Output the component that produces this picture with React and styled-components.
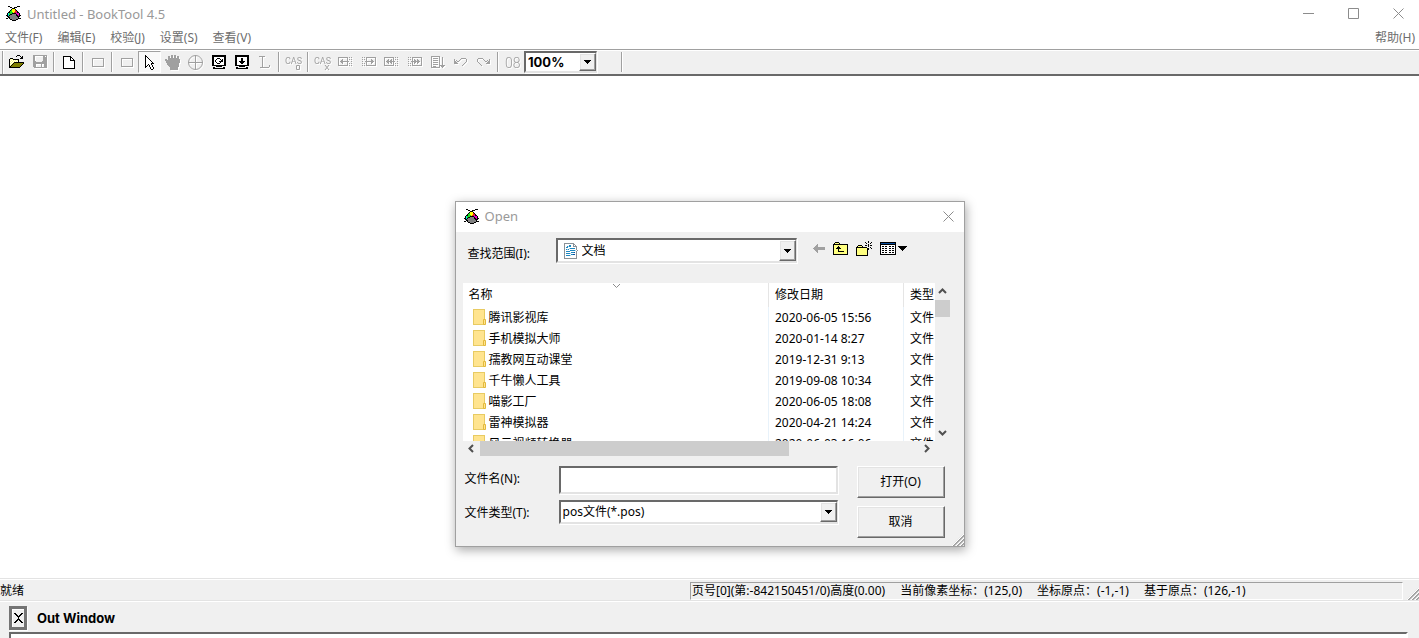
import React from "react";
import styled, { createGlobalStyle, css } from "styled-components";

const GlobalStyle = createGlobalStyle`
  * {
    box-sizing: border-box;
  }

  body {
    margin: 0;
    background: #fff;
    color: #000;
    font-family: "Noto Sans", "Noto Sans CJK SC", sans-serif;
    font-size: 12px;
    line-height: 16px;
  }

  button, input, select {
    font: inherit;
    color: inherit;
    margin: 0;
    padding: 0;
    border: 0;
    border-radius: 0;
    background: none;
    outline: none;
  }

  svg {
    display: block;
    flex: none;
  }
`;

/* ---------- pixel icons ---------- */

const palette = {
  k: "#000000",
  g: "#a0a0a0",
  w: "#ffffff",
  y: "#ffff80",
  Y: "#ffff00",
  o: "#808000",
  c: "#00e0e0",
  n: "#20e020",
  r: "#f02020",
  m: "#e000c0",
  d: "#808080",
  b: "#0a50a0",
  s: "#8a9298",
  l: "#1e88c0",
  t: "#a8d4ec",
};

const PixelIcon = ({ art }) => {
  const rows = art.trim().split("\n").map((row) => row.trim());
  const width = Math.max(...rows.map((row) => row.length));
  const paths = {};

  rows.forEach((row, y) => {
    [...row].forEach((char, x) => {
      if (palette[char]) {
        paths[char] = `${paths[char] || ""}M${x} ${y}h1v1h-1z`;
      }
    });
  });

  return (
    <svg
      width={width}
      height={rows.length}
      viewBox={`0 0 ${width} ${rows.length}`}
      shapeRendering="crispEdges"
      aria-hidden="true"
    >
      {Object.keys(paths).map((char) => (
        <path key={char} d={paths[char]} fill={palette[char]} />
      ))}
    </svg>
  );
};

const art = {
  app: `
    ..kk.......kkk.
    ....kk..kkk....
    ......kkk......
    .....kYYYk.....
    ....knYYYrk....
    ...knnYYYrrk...
    ..kknnnYrrmkk..
    .kcnnnkkkkmmmk.
    .kcnkkddddkmmk.
    kkckddddddkkmkk
    .kkddddddddkkk.
    ..kkddddddddk..
    kk.kddddddddkkk
    ....kkddddkk...
    ......kkkk.....`,
  open: `
    ........kkk....
    .......k...k.k.
    ............kk.
    .kkk.......kkk.
    kywykkkkkk.....
    kwywywywyk.....
    kywywywywk.....
    kwywykkkkkkkkkk
    kywykoooooooook
    kwykoooooooook.
    kykoooooooook..
    kkoooooooook...
    kkkkkkkkkkk....
    ...............`,
  save: `
    gggggggggggggg
    gg........gg.g
    gg........gggg
    gg........gggg
    gg........gggg
    gg........gggg
    ggg......ggggg
    gggggggggggggg
    gggggggggggggg
    ggg.....g..ggg
    ggg.....g..ggg
    ggg.....g..ggg
    .ggggggggggggg
    ..............`,
  page: `
    kkkkkkkk....
    kwwwwwwkk...
    kwwwwwwkwk..
    kwwwwwwkwwk.
    kwwwwwwkkkkk
    kwwwwwwwwwwk
    kwwwwwwwwwwk
    kwwwwwwwwwwk
    kwwwwwwwwwwk
    kwwwwwwwwwwk
    kwwwwwwwwwwk
    kwwwwwwwwwwk
    kkkkkkkkkkkk`,
  rect: `
    gggggggggggg
    g..........g
    g..........g
    g..........g
    g..........g
    g..........g
    g..........g
    g..........g
    gggggggggggg`,
  arrow: `
    k.........
    kk........
    kwk.......
    kwwk......
    kwwwk.....
    kwwwwk....
    kwwwwwk...
    kwwwwwwk..
    kwwwwwkkk.
    kwwkwwk...
    kwk.kwwk..
    kk..kwwk..
    k....kwwk.
    .....kwwk.
    ......kk..`,
  hand: `
    ......gg.gg.....
    ...gg.gg.gg.gg..
    ...gg.gg.gg.gg..
    ...ggggggggggg..
    gg.gggggggggggg.
    ggggggggggggggg.
    .gggggggggggggg.
    .gggggggggggggg.
    ..gggggggggggg..
    ..gggggggggggg..
    ...ggggggggggg..
    ....gggggggggg..
    .....gggggggg...
    .....gggggggg...
    .....gggggggg...`,
  refresh: `
    kkkkkkkkkkkkkk
    kkkkkkkkkkkkkk
    kkwwwwwwwwwwkk
    kkwwwkkkwwwwkk
    kkwwkwwwkwkwkk
    kkwkwwwwwkkwkk
    kkwkwwwkkkkwkk
    kkwwkwwwkwwwkk
    kkwwwkkkwwwwkk
    kkwwwwwwwwwwkk
    kkkkkkkkkkkkkk
    ....kkkkkk....
    .kk........kk.
    .kkkkkkkkkkkk.
    ..............`,
  download: `
    kkkkkkkkkkkkkk
    kkkkkkkkkkkkkk
    kkwwwwwwwwwwkk
    kkwwwwkkwwwwkk
    kkwwwwkkwwwwkk
    kkwwwwkkwwwwkk
    kkwwkkkkkkwwkk
    kkwwwkkkkwwwkk
    kkwwwwkkwwwwkk
    kkwwwwwwwwwwkk
    kkkkkkkkkkkkkk
    ....kkkkkk....
    .kk........kk.
    .kkkkkkkkkkkk.
    ..............`,
  baseline: `
    gggggg.....
    ...g.......
    ...g.......
    ...g.......
    ...g.......
    ...g.......
    ...g.......
    ...g.......
    ...g.......
    ...g......g
    ...g......g
    .ggggggggg.`,
  moveLeft: `
    gggggggggg.g.g.
    g........g.....
    g...g....g.g.g.
    g..gg....g.....
    g.ggggggggg..g.
    g..gg....g.....
    g...g....g.g.g.
    g........g.....
    gggggggggg.g.g.
    ...............`,
  moveRight: `
    .g.g.gggggggggg
    .....g........g
    .g.g.g....g...g
    .....g....gg..g
    .g..ggggggggg.g
    .....g....gg..g
    .g.g.g....g...g
    .....g........g
    .g.g.gggggggggg
    ...............`,
  fastLeft: `
    gggggggggg.g.g.
    g........g.....
    g...g..g.g.g.g.
    g..gg.gg.g.....
    g.ggggggggg..g.
    g..gg.gg.g.....
    g...g..g.g.g.g.
    g........g.....
    gggggggggg.g.g.
    ...............`,
  fastRight: `
    .g.g.gggggggggg
    .....g........g
    .g.g.g.g..g...g
    .....g.gg.gg..g
    .g..ggggggggg.g
    .....g.gg.gg..g
    .g.g.g.g..g...g
    .....g........g
    .g.g.gggggggggg
    ...............`,
  sort: `
    ggggggggg....
    g.......g..g.
    g.ggggg.g..g.
    g.......g..g.
    g.ggggg.g..g.
    g.......g..g.
    g.ggggg.g..g.
    g.......g..g.
    g.ggggg.g..g.
    g.......gggggg
    g.ggg...g.ggg
    ggggggggg..g.`,
  undo: `
    .......ggggg.
    g.....g.....g
    g.g..g......g
    gg.gg.......g
    ggg........g.
    gggg......g..
    .........g...
    ........g....`,
  redo: `
    .ggggg.......
    g.....g.....g
    g......g..g.g
    g.......gg.gg
    .g........ggg
    ..g......gggg
    ...g.........
    ....g........`,
  back: `
    ....g.......
    ...gg.......
    ..ggg.......
    .ggggggggggg
    gggggggggggg
    .ggggggggggg
    ..ggg.......
    ...gg.......
    ....g.......`,
  up: `
    ..kkkk.........
    .kyyyyk........
    kkkkkkkkkkkkkkk
    kyyyyyyyyyyyyyk
    kyyyykyyyyyyyyk
    kyyykkkyyyyyyyk
    kyykkkkkyyyyyyk
    kyyyykyyyyyyyyk
    kyyyykyyyyyyyyk
    kyyyykkkkkkyyyk
    kyyyyyyyyyyyyyk
    kyyyyyyyyyyyyyk
    kkkkkkkkkkkkkkk`,
  create: `
    ............k...
    .........k..k..k
    ..........k...k.
    ............k...
    ..kkkk...kk.k.kk
    .kyyyyk.....k...
    kkkkkkkkkkk...k.
    kyyyyyyyyyykk..k
    kyyyyyyyyyykk...
    kyyyyyyyyyyk....
    kyyyyyyyyyyk....
    kyyyyyyyyyyk....
    kyyyyyyyyyyk....
    kyyyyyyyyyyk....
    kkkkkkkkkkkk....`,
  details: `
    kkkkkkkkkkkkkkkk
    kbbbbbbbbbbbbbbk
    kkkkkkkkkkkkkkkk
    kwwwwwwwwwwwwwwk
    kwkkwkkwwkkwkkwk
    kwwwwwwwwwwwwwwk
    kwkkwkkwwkkwkkwk
    kwwwwwwwwwwwwwwk
    kwkkwkkwwkkwkkwk
    kwwwwwwwwwwwwwwk
    kwkkwkkwwkkwkkwk
    kwwwwwwwwwwwwwwk
    kkkkkkkkkkkkkkkk`,
  drop: `
    kkkkkkkkk
    .kkkkkkk.
    ..kkkkk..
    ...kkk...
    ....k....`,
  dropSmall: `
    kkkkkkk
    .kkkkk.
    ..kkk..
    ...k...`,
  document: `
    ssssssssss...
    swwwwwwwwss..
    swwwwllwwsws.
    swwltllwwssss
    swllwwwwwwwws
    swwwwtlllllws
    swltlwwwwwwws
    swwwwwllllltws
    swllllwwwwwws
    swwwwwwlllbws
    swlllltwwwwws
    swwwwwwllbbws
    swlllltwwwwws
    swwwwwwwwwwws
    swwwwwwwwwwws
    sssssssssssss`,
  cross: `
    kk.....kk
    .kk...kk.
    ..kk.kk..
    ...kkk...
    ....k....
    ....k....
    ...kkk...
    ..kk.kk..
    .kk...kk.
    kk.....kk`,
};

const TargetIcon = () => (
  <svg width="15" height="15" viewBox="0 0 15 15" fill="none" stroke="#a0a0a0">
    <circle cx="7.5" cy="7.5" r="7" />
    <path d="M7.5 0v15M0 7.5h15" />
  </svg>
);

const CasIcon = ({ mark }) => (
  <svg width="17" height="15" viewBox="0 0 17 15" fill="#a0a0a0">
    <text x="0" y="9" fontSize="9" fontFamily="Roboto, sans-serif">
      CAS
    </text>
    {mark === "box" ? (
      <path d="M11.5 10.5h3v4h-3z" fill="none" stroke="#a0a0a0" />
    ) : (
      <path d="M11 10l4 5m0-5l-4 5" fill="none" stroke="#a0a0a0" />
    )}
  </svg>
);

const CounterIcon = () => (
  <svg width="15" height="15" viewBox="0 0 15 15" fill="#a0a0a0">
    <text x="0" y="13" fontSize="14" fontFamily="Roboto, sans-serif" fontWeight="300">
      08
    </text>
  </svg>
);

const Chevron = ({ turn = 0, thin }) => (
  <svg width="9" height="9" viewBox="0 0 9 9" fill="none">
    <path
      d="M1 6l3.500-3.500L8 6"
      transform={`rotate(${turn} 4.500 4.500)`}
      stroke={thin ? "#8c8c8c" : "#505050"}
      strokeWidth={thin ? 1 : 2}
    />
  </svg>
);

const FolderIcon = () => (
  <svg width="14" height="17" viewBox="0 0 14 17">
    <rect x="0.500" y="0.500" width="11" height="15" fill="#ffe48f" stroke="#e8cb62" />
    <path d="M10.500 10.500h2v5h-2z" fill="#ffe48f" stroke="#e3b93c" />
  </svg>
);

const Grip = () => (
  <svg width="12" height="12" viewBox="0 0 12 12" fill="none">
    <path d="M1 12L12 1M5 12l7-7M9 12l3-3" stroke="#a0a0a0" strokeWidth="2" />
    <path d="M0 12L12 0M4 12l8-8M8 12l4-4" stroke="#fff" />
  </svg>
);

/* ---------- shared controls ---------- */

const raised = css`
  background: #f0f0f0;
  border: 1px solid;
  border-color: #fff #696969 #696969 #fff;
  box-shadow: inset -1px -1px 0 #a0a0a0, inset 1px 1px 0 #e3e3e3;
`;

const sunken = css`
  background: #fff;
  border: 2px solid;
  border-color: #696969 #e3e3e3 #e3e3e3 #696969;
  box-shadow: 1px 1px 0 #fff;
`;

const ComboBox = styled.div`
  ${sunken}
  display: flex;
  align-items: stretch;
  width: ${(props) => props.$width || "auto"};
  height: ${(props) => props.$height}px;
  border-right-width: 1px;
`;

const ComboIcon = styled.span`
  display: flex;
  align-items: center;
  padding-left: 6px;
`;

const Select = styled.select`
  flex: 1;
  min-width: 0;
  appearance: none;
  padding-left: ${(props) => props.$indent || 2}px;
  font-family: ${(props) => (props.$bold ? "Inter, sans-serif" : "inherit")};
  font-size: ${(props) => (props.$bold ? 13 : 12)}px;
  font-weight: ${(props) => (props.$bold ? 700 : 400)};
`;

const ComboArrow = styled.span`
  ${raised}
  display: flex;
  align-items: center;
  justify-content: center;
  width: 17px;
`;

/* ---------- main window ---------- */

const Window = styled.div`
  display: flex;
  flex-direction: column;
  min-height: 100vh;
`;

const TitleBar = styled.header`
  display: flex;
  align-items: center;
  height: 27px;
  padding: 0 15px 0 6px;
  gap: 6px;
  color: #999;
`;

const Title = styled.h1`
  flex: 1;
  margin: 0;
  font-size: 13px;
  font-weight: 400;
`;

const WindowButtons = styled.div`
  display: flex;
  gap: 34px;
`;

const WindowButton = styled.button`
  display: flex;
  align-items: center;
  justify-content: center;
`;

const MenuBar = styled.nav`
  display: flex;
  align-items: center;
  gap: 15px;
  height: 22px;
  padding: 0 4px 0 5px;
  color: #6d6d6d;
`;

const MenuItem = styled.button`
  margin-left: ${(props) => (props.$right ? "auto" : 0)};
`;

const ToolBar = styled.div`
  display: flex;
  align-items: center;
  height: 27px;
  padding-left: 2px;
  background: #f0f0f0;
  border-top: 1px solid #a0a0a0;
  border-bottom: 2px solid #696969;
  box-shadow: inset 0 1px 0 #fff, inset 0 -1px 0 #f0f0f0;
`;

const ToolBarEdge = styled.span`
  width: 2px;
  height: 23px;
  margin-right: 1px;
  border-left: 1px solid #a0a0a0;
  border-right: 1px solid #fff;
`;

const ToolButton = styled.button`
  display: flex;
  align-items: center;
  justify-content: center;
  width: 23px;
  height: 22px;

  svg {
    filter: ${(props) => (props.disabled ? "drop-shadow(1px 1px 0 #fff)" : "none")};
  }

  ${(props) =>
    props.$pressed &&
    css`
      background: #f8f8f8;
      border: 1px solid;
      border-color: #a0a0a0 #fff #fff #a0a0a0;
    `}
`;

const Separator = styled.span`
  width: 6px;
  height: 20px;
  padding: 0 2px;

  &::before {
    content: "";
    display: block;
    height: 100%;
    border-left: 1px solid #a0a0a0;
    border-right: 1px solid #fff;
  }
`;

const ToolBarGap = styled.span`
  width: 22px;
`;

const Workspace = styled.main`
  flex: 1;
  display: flex;
  justify-content: center;
  align-items: flex-start;
  padding: 125px 0 30px;
`;

const StatusBar = styled.footer`
  display: flex;
  align-items: center;
  height: 22px;
  padding-top: 2px;
  background: #f0f0f0;
  border-top: 1px solid #e3e3e3;
  box-shadow: inset 0 1px 0 #fff;
`;

const StatusText = styled.span`
  flex: 1;
`;

const StatusPane = styled.div`
  display: flex;
  gap: 15px;
  width: 713px;
  height: 18px;
  margin-right: 4px;
  padding-left: 1px;
  border: 1px solid;
  border-color: #a0a0a0 #fff #fff #a0a0a0;
  white-space: nowrap;
`;

const GripSlot = styled.span`
  align-self: flex-end;
`;

const OutPanel = styled.section`
  padding: 5px 11px 0 9px;
  background: #f0f0f0;
  border-top: 1px solid #e3e3e3;
  box-shadow: inset 0 1px 0 #fff;
`;

const OutHeader = styled.div`
  display: flex;
  align-items: flex-start;
  gap: 10px;
  height: 26px;
`;

const OutClose = styled.button`
  display: flex;
  align-items: center;
  justify-content: center;
  width: 18px;
  height: 24px;
  border: 3px solid #747474;
  box-shadow: 1px 1px 0 #fff, inset 1px 1px 0 #fff;
`;

const OutTitle = styled.h2`
  margin: 0;
  padding-top: 4px;
  font-family: Inter, sans-serif;
  font-size: 13px;
  font-weight: 700;
`;

const OutBody = styled.div`
  height: 6px;
  background: #fff;
  border: 2px solid;
  border-color: #696969 #fff #fff #696969;
  border-bottom: 0;
`;

/* ---------- open dialog ---------- */

const Dialog = styled.div`
  width: 510px;
  background: #f0f0f0;
  border: 1px solid #a0a0a0;
  box-shadow: 1px 3px 10px rgba(0, 0, 0, 0.35);
`;

const DialogTitleBar = styled.div`
  display: flex;
  align-items: center;
  gap: 6px;
  height: 30px;
  padding: 0 10px 2px 8px;
  background: #fff;
  color: #999;
`;

const DialogTitle = styled.h2`
  flex: 1;
  margin: 0;
  font-size: 13px;
  font-weight: 400;
`;

const LookInRow = styled.div`
  display: flex;
  align-items: center;
  height: 51px;
  padding: 0 0 14px 12px;
`;

const LookInLabel = styled.label`
  width: 88px;
  padding-top: 6px;
`;

const FolderTools = styled.div`
  display: flex;
  align-items: center;
  gap: 8px;
  margin: 0 0 4px 16px;
`;

const FolderTool = styled.button`
  display: flex;
  align-items: center;
  gap: 2px;
`;

const Browser = styled.div`
  display: grid;
  grid-template-columns: 1fr 15px;
  grid-template-rows: 158px 15px;
  margin: 0 14px 0 7px;
`;

const ListView = styled.div`
  overflow: hidden;
  background: #fff;
`;

const FileTable = styled.table`
  width: 100%;
  table-layout: fixed;
  border-collapse: collapse;
`;

const HeadCell = styled.th`
  width: ${(props) => props.$width};
  height: 24px;
  padding: 0 0 0 6px;
  border-left: ${(props) => (props.$first ? 0 : "1px solid #e5e5e5")};
  font-weight: 400;
  text-align: left;
  white-space: nowrap;
`;

const HeadName = styled.span`
  display: flex;
  justify-content: space-between;
  padding-right: 147px;

  svg {
    margin-top: -6px;
  }
`;

const Cell = styled.td`
  height: 21px;
  padding: 0 0 0 6px;
  border-left: ${(props) => (props.$first ? 0 : "1px solid #e8f2fa")};
  white-space: nowrap;
`;

const FileName = styled.span`
  display: flex;
  align-items: center;
  gap: 2px;
  height: 21px;
  padding-left: 4px;
`;

const ScrollBar = styled.div`
  display: flex;
  flex-direction: ${(props) => (props.$vertical ? "column" : "row")};
`;

const ScrollButton = styled.button`
  display: flex;
  align-items: center;
  justify-content: center;
  width: 17px;
  height: 15px;

  ${(props) =>
    props.$vertical &&
    css`
      width: 15px;
      height: 17px;
    `}
`;

const ScrollTrack = styled.div`
  flex: 1;
`;

const ScrollThumb = styled.div`
  width: ${(props) => props.$width || "100%"};
  height: ${(props) => props.$height || "100%"};
  background: #cdcdcd;
`;

const DialogForm = styled.form`
  display: grid;
  grid-template-columns: 94px 279px 88px;
  grid-template-rows: 28px 1fr;
  row-gap: 6px;
  padding: 10px 0 8px 9px;
`;

const FieldLabel = styled.label`
  padding-top: 5px;
`;

const TextInput = styled.input`
  ${sunken}
  height: 28px;
  padding: 0 3px;
`;

const DialogButtons = styled.div`
  display: flex;
  flex-direction: column;
  gap: 8px;
  grid-column: 3;
  grid-row: 1 / span 2;
  width: 88px;
  margin-left: 19px;
`;

const PushButton = styled.button`
  ${raised}
  height: 32px;
`;

const DialogGrip = styled.div`
  display: flex;
  justify-content: flex-end;
  margin-top: -12px;
`;

const menus = ["文件(F)", "编辑(E)", "校验(J)", "设置(S)", "查看(V)"];

const tools = [
  { name: "打开", icon: "open", enabled: true },
  { name: "保存", icon: "save" },
  null,
  { name: "新建", icon: "page", enabled: true },
  null,
  { name: "区域", icon: "rect" },
  null,
  { name: "矩形", icon: "rect" },
  { name: "选择", icon: "arrow", enabled: true, pressed: true },
  { name: "移动", icon: "hand" },
  { name: "原点", node: <TargetIcon /> },
  { name: "刷新", icon: "refresh", enabled: true },
  { name: "下载", icon: "download", enabled: true },
  { name: "基线", icon: "baseline" },
  null,
  { name: "CAS", node: <CasIcon mark="box" /> },
  null,
  { name: "CAS X", node: <CasIcon mark="x" /> },
  { name: "左移", icon: "moveLeft" },
  { name: "右移", icon: "moveRight" },
  { name: "快速左移", icon: "fastLeft" },
  { name: "快速右移", icon: "fastRight" },
  { name: "排序", icon: "sort" },
  { name: "撤销", icon: "undo" },
  { name: "重做", icon: "redo" },
  null,
  { name: "编号", node: <CounterIcon /> },
];

const files = [
  { name: "腾讯影视库", date: "2020-06-05 15:56" },
  { name: "手机模拟大师", date: "2020-01-14 8:27" },
  { name: "孺教网互动课堂", date: "2019-12-31 9:13" },
  { name: "千牛懒人工具", date: "2019-09-08 10:34" },
  { name: "喵影工厂", date: "2020-06-05 18:08" },
  { name: "雷神模拟器", date: "2020-04-21 14:24" },
  { name: "风云视频转换器", date: "2020-06-03 16:06" },
];

const CloseGlyph = () => (
  <svg width="11" height="11" viewBox="0 0 11 11" fill="none" stroke="#8c8c8c">
    <path d="M.5.5l10 10M10.500.5l-10 10" />
  </svg>
);

const OpenDialog = () => (
  <Dialog role="dialog" aria-labelledby="dialog-title">
    <DialogTitleBar>
      <PixelIcon art={art.app} />
      <DialogTitle id="dialog-title">Open</DialogTitle>
      <WindowButton aria-label="关闭">
        <CloseGlyph />
      </WindowButton>
    </DialogTitleBar>

    <LookInRow>
      <LookInLabel htmlFor="look-in">查找范围(I):</LookInLabel>
      <ComboBox $width="241px" $height={25}>
        <ComboIcon>
          <PixelIcon art={art.document} />
        </ComboIcon>
        <Select id="look-in" $indent={4}>
          <option>文档</option>
        </Select>
        <ComboArrow>
          <PixelIcon art={art.dropSmall} />
        </ComboArrow>
      </ComboBox>
      <FolderTools>
        <FolderTool aria-label="后退" disabled>
          <PixelIcon art={art.back} />
        </FolderTool>
        <FolderTool aria-label="向上">
          <PixelIcon art={art.up} />
        </FolderTool>
        <FolderTool aria-label="新建文件夹">
          <PixelIcon art={art.create} />
        </FolderTool>
        <FolderTool aria-label="视图">
          <PixelIcon art={art.details} />
          <PixelIcon art={art.drop} />
        </FolderTool>
      </FolderTools>
    </LookInRow>

    <Browser>
      <ListView>
        <FileTable>
          <thead>
            <tr>
              <HeadCell $first>
                <HeadName>
                  名称
                  <Chevron turn={180} thin />
                </HeadName>
              </HeadCell>
              <HeadCell $width="135px">修改日期</HeadCell>
              <HeadCell $width="31px">类型</HeadCell>
            </tr>
          </thead>
          <tbody>
            {files.map((file) => (
              <tr key={file.name}>
                <Cell $first>
                  <FileName>
                    <FolderIcon />
                    {file.name}
                  </FileName>
                </Cell>
                <Cell>{file.date}</Cell>
                <Cell>文件</Cell>
              </tr>
            ))}
          </tbody>
        </FileTable>
      </ListView>
      <ScrollBar $vertical>
        <ScrollButton $vertical aria-label="向上滚动">
          <Chevron />
        </ScrollButton>
        <ScrollTrack>
          <ScrollThumb $height="17px" />
        </ScrollTrack>
        <ScrollButton $vertical aria-label="向下滚动">
          <Chevron turn={180} />
        </ScrollButton>
      </ScrollBar>
      <ScrollBar>
        <ScrollButton aria-label="向左滚动">
          <Chevron turn={-90} />
        </ScrollButton>
        <ScrollTrack>
          <ScrollThumb $width="309px" />
        </ScrollTrack>
        <ScrollButton aria-label="向右滚动">
          <Chevron turn={90} />
        </ScrollButton>
      </ScrollBar>
    </Browser>

    <DialogForm>
      <FieldLabel htmlFor="file-name">文件名(N):</FieldLabel>
      <TextInput id="file-name" type="text" />
      <FieldLabel htmlFor="file-type">文件类型(T):</FieldLabel>
      <ComboBox $height={24}>
        <Select id="file-type">
          <option>pos文件(*.pos)</option>
        </Select>
        <ComboArrow>
          <PixelIcon art={art.dropSmall} />
        </ComboArrow>
      </ComboBox>
      <DialogButtons>
        <PushButton type="button">打开(O)</PushButton>
        <PushButton type="button">取消</PushButton>
      </DialogButtons>
    </DialogForm>
    <DialogGrip>
      <Grip />
    </DialogGrip>
  </Dialog>
);

const App = () => (
  <>
    <GlobalStyle />
    <Window>
      <TitleBar>
        <PixelIcon art={art.app} />
        <Title>Untitled - BookTool 4.5</Title>
        <WindowButtons>
          <WindowButton aria-label="最小化">
            <svg width="11" height="11" viewBox="0 0 11 11" stroke="#8c8c8c">
              <path d="M0 5.500h11" />
            </svg>
          </WindowButton>
          <WindowButton aria-label="最大化">
            <svg width="11" height="11" viewBox="0 0 11 11" fill="none" stroke="#8c8c8c">
              <path d="M.5.5h10v10h-10z" />
            </svg>
          </WindowButton>
          <WindowButton aria-label="关闭">
            <CloseGlyph />
          </WindowButton>
        </WindowButtons>
      </TitleBar>

      <MenuBar>
        {menus.map((menu) => (
          <MenuItem key={menu}>{menu}</MenuItem>
        ))}
        <MenuItem $right>帮助(H)</MenuItem>
      </MenuBar>

      <ToolBar>
        <ToolBarEdge />
        {tools.map((tool, index) =>
          tool ? (
            <ToolButton
              key={index}
              aria-label={tool.name}
              disabled={!tool.enabled}
              $pressed={tool.pressed}
            >
              {tool.node || <PixelIcon art={art[tool.icon]} />}
            </ToolButton>
          ) : (
            <Separator key={index} />
          )
        )}
        <ComboBox $width="73px" $height={22}>
          <Select aria-label="缩放" $bold>
            <option>100%</option>
          </Select>
          <ComboArrow>
            <PixelIcon art={art.dropSmall} />
          </ComboArrow>
        </ComboBox>
        <ToolBarGap />
        <Separator />
      </ToolBar>

      <Workspace>
        <OpenDialog />
      </Workspace>

      <StatusBar>
        <StatusText>就绪</StatusText>
        <StatusPane>
          <span>页号[0](第:-842150451/0)高度(0.00)</span>
          <span>当前像素坐标：(125,0)</span>
          <span>坐标原点：(-1,-1)</span>
          <span>基于原点：(126,-1)</span>
        </StatusPane>
        <GripSlot>
          <Grip />
        </GripSlot>
      </StatusBar>

      <OutPanel>
        <OutHeader>
          <OutClose aria-label="关闭">
            <PixelIcon art={art.cross} />
          </OutClose>
          <OutTitle>Out Window</OutTitle>
        </OutHeader>
        <OutBody />
      </OutPanel>
    </Window>
  </>
);

export default App;
